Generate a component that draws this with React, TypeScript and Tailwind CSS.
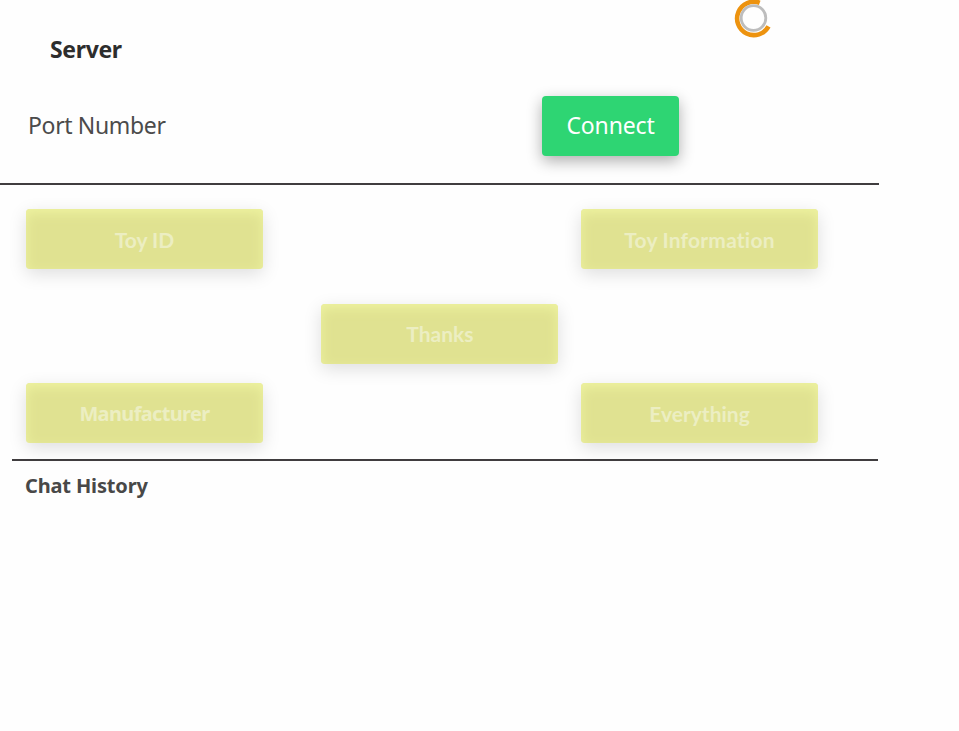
const ui = "font-['Noto_Sans','Open_Sans',sans-serif]";
const human = "font-['Lato','Open_Sans',sans-serif] [font-variant-ligatures:none]";

function Spinner() {
  return (
    <svg className="block h-10 w-10" viewBox="0 0 40 40" fill="none">
      <path d="M26.7 2.8A16.7 16.7 0 1 0 35.5 26.4" stroke="#ed930f" strokeWidth="4.6" />
      <circle cx="20.5" cy="18" r="12.3" stroke="#bdbdbd" strokeWidth="2.8" />
    </svg>
  );
}

function RequestButton({ label, text }: { label: string; text: string }) {
  return (
    <button
      disabled
      className="flex h-[60px] w-[237px] items-center justify-center rounded-[4px] bg-[#e0e291] shadow-[0_5px_18px_rgba(0,0,0,0.13),inset_0_4px_12px_#eef3a0]"
    >
      <span className={`${text} whitespace-nowrap font-bold text-[#eceec2]`}>{label}</span>
    </button>
  );
}

export default function App() {
  return (
    <main className={`${ui} h-[731px] w-[959px] overflow-hidden bg-[#fefefe]`}>
      <header className="flex h-20 items-start justify-between pl-[50px] pr-[186px]">
        <h1 className="pt-[33px] text-[23px] leading-[32px] font-bold tracking-[-0.35px] text-[#2d2d2d]">Server</h1>
        <Spinner />
      </header>
      <section className="flex h-[105px] w-[879px] items-start justify-between border-b-2 border-[#403d3f] pl-7 pr-[200px] pt-[15.5px]">
        <label className="pt-[13.5px] text-[23px] leading-[32px] tracking-[-0.35px] text-[#4b4b4b]">Port Number</label>
        <button className="flex h-[60px] w-[137px] items-center justify-center rounded-[4px] bg-[#2ed573] pb-px text-[23px] tracking-[-0.15px] text-white shadow-[0_5px_15px_rgba(0,0,0,0.32)]">
          Connect
        </button>
      </section>
      <section className="ml-3 flex h-[276px] w-[866px] flex-col border-b-2 border-[#403d3f] pl-[14px] pr-[60px] pt-6">
        <div className="flex justify-between">
          <RequestButton label="Toy ID" text={`${human} text-[21px] pt-[2px]`} />
          <RequestButton label="Toy Information" text={`${human} text-[21px] pt-[2px] tracking-[0.2px]`} />
        </div>
        <div className="flex pl-[295.4px] pt-[35px]">
          <RequestButton label="Thanks" text={`${human} text-[21px]`} />
        </div>
        <div className="flex justify-between pt-[19.4px]">
          <RequestButton label="Manufacturer" text={`${ui} text-[20px] pt-[2px] tracking-[-0.65px]`} />
          <RequestButton label="Everything" text={`${human} text-[21px] pt-px`} />
        </div>
      </section>
      <h2 className="pl-[25px] pt-[10px] text-[20px] leading-[30px] font-bold tracking-[-0.15px] text-[#484848]">Chat History</h2>
    </main>
  );
}
